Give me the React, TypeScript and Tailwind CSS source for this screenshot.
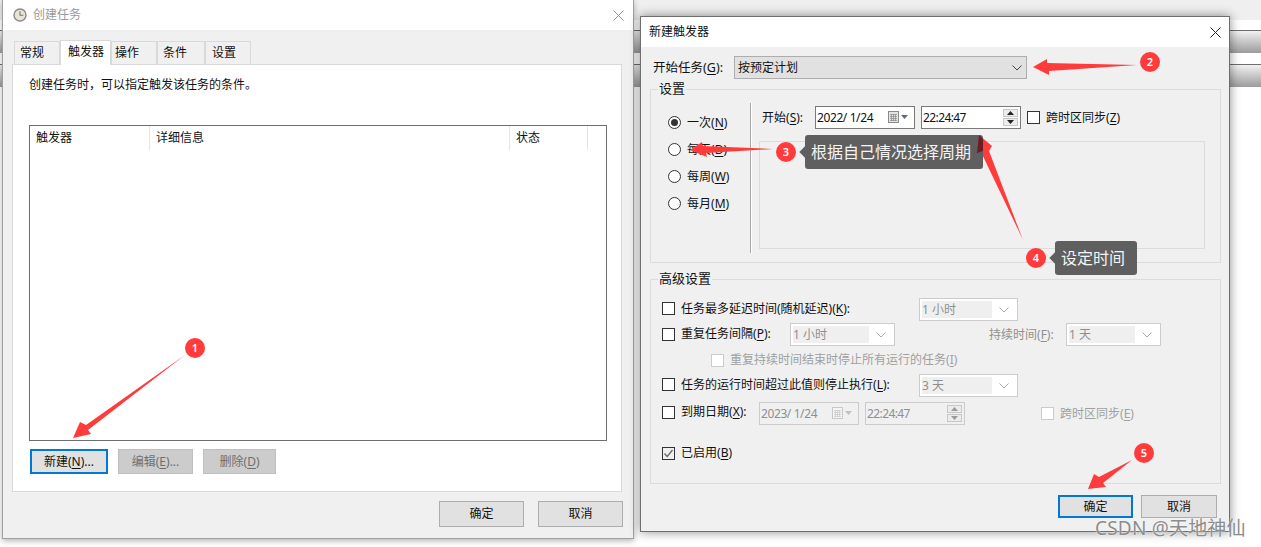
import type { ReactNode } from 'react';

const FONT = "font-['Noto_Sans','Noto_Sans_CJK_SC',sans-serif]";

function Key({ k }: { k: string }) {
  return (
    <>
      (<span className="underline underline-offset-2">{k}</span>)
    </>
  );
}

function CheckBox({ off, checked }: { off?: boolean; checked?: boolean }) {
  return (
    <span
      className={`flex h-[13px] w-[13px] shrink-0 items-center justify-center border ${
        off ? 'border-[#cccccc] bg-white' : checked ? 'border-[#333333] bg-[#f0f0f0]' : 'border-[#333333] bg-white'
      }`}
    >
      {checked && (
        <svg width="11" height="11" viewBox="0 0 11 11" fill="none" stroke="#666666" strokeWidth="1.3">
          <path d="M1.5 5.5 4.2 8.5 9.5 2" />
        </svg>
      )}
    </span>
  );
}

function Radio({ on, label }: { on?: boolean; label: ReactNode }) {
  return (
    <div className="flex h-[27px] items-center gap-[6px]">
      <span className="flex h-[13px] w-[13px] items-center justify-center rounded-full border border-[#333333] bg-white">
        {on && <span className="h-[7px] w-[7px] rounded-full bg-[#333333]" />}
      </span>
      <span>{label}</span>
    </div>
  );
}

function Chevron({ color }: { color: string }) {
  return (
    <svg width="10" height="6" viewBox="0 0 10 6" fill="none" stroke={color} strokeWidth="1">
      <path d="M0.5 0.5 5 5 9.5 0.5" />
    </svg>
  );
}

function OffSelect({ text, w }: { text: string; w: string }) {
  return (
    <div className={`flex h-[23px] items-center border border-[#cccccc] bg-white p-[2px] ${w}`}>
      <div className="flex h-full flex-1 items-center bg-[#efefef] text-[#8f8f8f]">{text}</div>
      <div className="flex w-[23px] justify-center">
        <Chevron color="#a8a8a8" />
      </div>
    </div>
  );
}

function CalendarIcon({ off }: { off?: boolean }) {
  const c = off ? '#c8c8c8' : '#8a8a8a';
  return (
    <svg width="24" height="13" viewBox="0 0 24 13">
      <rect x="0.5" y="0.5" width="10" height="11" fill={off ? '#f4f4f4' : '#e4e4e4'} stroke={c} />
      <path d="M2 3.5h7M2 5.5h7M2 7.5h7M2 9.5h7M3.5 3v7M5.5 3v7M7.5 3v7" stroke={c} strokeWidth="0.7" />
      <path d="M13 4h7l-3.5 4z" fill={off ? '#c0c0c0' : '#5b6b80'} />
    </svg>
  );
}

function DateBox({ text, off }: { text: string; off?: boolean }) {
  return (
    <div
      className={`flex h-[23px] w-[100px] items-center justify-between border pl-[1px] pr-[2px] ${
        off ? 'border-[#cccccc] bg-[#f0f0f0] text-[#8f8f8f]' : 'border-[#7a7a7a] bg-white'
      }`}
    >
      <span className="whitespace-pre tracking-[-0.4px]">{text}</span>
      <CalendarIcon off={off} />
    </div>
  );
}

function TimeBox({ off }: { off?: boolean }) {
  const arrow = off ? '#9a9a9a' : '#222222';
  return (
    <div
      className={`flex h-[23px] w-[100px] items-center justify-between border pl-[1px] pr-[2px] ${
        off ? 'border-[#cccccc] bg-[#f0f0f0] text-[#8f8f8f]' : 'border-[#7a7a7a] bg-white'
      }`}
    >
      <span className="tracking-[-0.6px]">22:24:47</span>
      <div className="flex flex-col gap-[1px]">
        <span className="flex h-[8px] w-[15px] items-center justify-center border border-[#c8c8c8] bg-[#ececec]">
          <svg width="7" height="4" viewBox="0 0 7 4"><path d="M3.5 0 7 4H0z" fill={arrow} /></svg>
        </span>
        <span className="flex h-[8px] w-[15px] items-center justify-center border border-[#c8c8c8] bg-[#ececec]">
          <svg width="7" height="4" viewBox="0 0 7 4"><path d="M0 0h7L3.5 4z" fill={arrow} /></svg>
        </span>
      </div>
    </div>
  );
}

function Btn({ children, w, h, kind }: { children: ReactNode; w: string; h: string; kind?: 'focus' | 'off' }) {
  const style =
    kind === 'focus'
      ? 'border-2 border-[#0078d7] bg-[#e1e1e1]'
      : kind === 'off'
        ? 'border border-[#bfbfbf] bg-[#cccccc] text-[#6f6f6f]'
        : 'border border-[#adadad] bg-[#e1e1e1]';
  return <div className={`flex items-center justify-center ${w} ${h} ${style}`}>{children}</div>;
}

function Group({ title, h, children }: { title: string; h: string; children: ReactNode }) {
  return (
    <fieldset className={`ml-[9px] w-[571px] border border-[#dcdcdc] ${h}`}>
      <legend className="ml-[7px] px-[1px] pb-[2px] text-[13px] leading-[16px]">{title}</legend>
      {children}
    </fieldset>
  );
}

function TaskWindow() {
  const tabs = [
    { name: '常规', cls: 'w-[46px] pl-[5px]' },
    { name: '触发器', cls: 'w-[51px] pl-[7px]', on: true },
    { name: '操作', cls: 'w-[46px] pl-[3px]' },
    { name: '条件', cls: 'w-[48px] pl-[5px]' },
    { name: '设置', cls: 'w-[46px] pl-[6px]' },
  ];
  return (
    <div className="absolute left-[2px] top-0 h-[539px] w-[632px] border-x border-b border-[#a0a0a0] bg-[#f0f0f0] shadow-[0_2px_6px_rgba(0,0,0,0.3)]">
      <div className="flex h-[30px] items-center justify-between bg-white pl-[10px] pr-[9px]">
        <div className="flex items-center gap-[6px] text-[#9a9a9a]">
          <svg width="14" height="14" viewBox="0 0 14 14">
            <circle cx="7" cy="7" r="6" fill="#e8e4d8" stroke="#8a8a8a" strokeWidth="1.4" />
            <path d="M7 3.2V7.3H10.4" fill="none" stroke="#777777" strokeWidth="1.1" />
          </svg>
          <span>创建任务</span>
        </div>
        <svg width="11" height="11" viewBox="0 0 11 11" stroke="#8f8f8f" strokeWidth="1">
          <path d="M0.5 0.5 10.5 10.5M10.5 0.5 0.5 10.5" />
        </svg>
      </div>

      <div className="flex h-[34px] items-end pl-[11px] pt-[9px]">
        {tabs.map((t) => (
          <div
            key={t.name}
            className={`flex items-center border border-b-0 border-[#d9d9d9] ${t.cls} ${
              t.on ? 'relative z-10 -mb-[1px] h-[25px] bg-white pb-[3px]' : 'h-[23px] bg-[#f0f0f0]'
            }`}
          >
            {t.name}
          </div>
        ))}
      </div>

      <div className="ml-[9px] h-[428px] w-[610px] border border-[#d9d9d9] bg-white pl-[16px] pt-[11px]">
        <p className="leading-[18px]">创建任务时，可以指定触发该任务的条件。</p>
        <div className="mt-[31px] h-[316px] w-[578px] border border-[#6e6e6e]">
          <div className="flex h-[24px] items-center">
            <div className="flex h-full w-[120px] items-center border-r border-[#e5e5e5] pl-[6px]">触发器</div>
            <div className="flex h-full w-[360px] items-center border-r border-[#e5e5e5] pl-[6px]">详细信息</div>
            <div className="flex h-full w-[78px] items-center border-r border-[#e5e5e5] pl-[6px]">状态</div>
          </div>
        </div>
        <div className="mt-[8px] flex pl-[1px]">
          <Btn w="w-[78px]" h="h-[25px]" kind="focus">新建<Key k="N" />...</Btn>
          <div className="ml-[10px]">
            <Btn w="w-[75px]" h="h-[25px]" kind="off">编辑<Key k="E" />...</Btn>
          </div>
          <div className="ml-[10px]">
            <Btn w="w-[73px]" h="h-[25px]" kind="off">删除<Key k="D" /></Btn>
          </div>
        </div>
      </div>

      <div className="mt-[9px] flex justify-end gap-[14px] pr-[10px]">
        <Btn w="w-[85px]" h="h-[26px]" >确定</Btn>
        <Btn w="w-[85px]" h="h-[26px]" >取消</Btn>
      </div>
    </div>
  );
}

function TriggerWindow() {
  return (
    <div className="absolute left-[640px] top-[16px] h-[516px] w-[590px] border border-[#6e6e6e] bg-[#f0f0f0] shadow-[0_0_10px_rgba(0,0,0,0.45)]">
      <div className="flex h-[30px] items-center justify-between bg-white pl-[8px] pr-[8px]">
        <span>新建触发器</span>
        <svg width="11" height="11" viewBox="0 0 11 11" stroke="#222222" strokeWidth="1">
          <path d="M0.5 0.5 10.5 10.5M10.5 0.5 0.5 10.5" />
        </svg>
      </div>

      <div className="mt-[9px] flex h-[23px] items-center pl-[12px]">
        <span className="w-[81px] text-[12.5px]">开始任务<Key k="G" />:</span>
        <div className="flex h-full w-[293px] items-center justify-between border border-[#adadad] bg-[#e1e1e1] pl-[3px] pr-[3px]">
          <span>按预定计划</span>
          <span className="pr-[1px]"><Chevron color="#444444" /></span>
        </div>
      </div>

      <div className="mt-[1px]">
        <Group title="设置" h="h-[183px]">
          <div className="flex">
            <div className="w-[99px] pl-[17px] pt-[11px]">
              <Radio on label={<>一次<Key k="N" /></>} />
              <Radio label={<>每天<Key k="D" /></>} />
              <Radio label={<>每周<Key k="W" /></>} />
              <Radio label={<>每月<Key k="M" /></>} />
            </div>
            <div className="mt-[5px] h-[150px] w-[2px] border-l border-r border-l-[#a8a8a8] border-r-white" />
            <div className="pl-[7px] pt-[8px]">
              <div className="flex items-center">
                <span className="w-[56px] pl-[3px]">开始<Key k="S" />:</span>
                <DateBox text="2022/ 1/24" />
                <div className="ml-[6px]"><TimeBox /></div>
                <div className="ml-[6px] flex items-center gap-[6px]">
                  <CheckBox />
                  <span>跨时区同步<Key k="Z" /></span>
                </div>
              </div>
              <div className="mt-[12px] h-[108px] w-[446px] border border-[#dcdcdc]" />
            </div>
          </div>
        </Group>
      </div>

      <div className="mt-[7px]">
        <Group title="高级设置" h="h-[214px]">
          <div className="pl-[11px] pt-[10px]">
            <div className="flex h-[23px] items-center">
              <div className="flex w-[257px] items-center gap-[6px] pb-[2px]">
                <CheckBox />
                <span>任务最多延迟时间(随机延迟)<Key k="K" />:</span>
              </div>
              <OffSelect text="1 小时" w="w-[99px]" />
            </div>
            <div className="mt-[2px] flex h-[23px] items-center">
              <div className="flex w-[128px] items-center gap-[6px] pb-[1px]">
                <CheckBox />
                <span>重复任务间隔<Key k="P" />:</span>
              </div>
              <OffSelect text="1 小时" w="w-[105px]" />
              <span className="ml-[94px] w-[77px] text-[#8f8f8f]">持续时间<Key k="F" />:</span>
              <OffSelect text="1 天" w="w-[95px]" />
            </div>
            <div className="flex h-[28px] items-center gap-[6px] pl-[49px] text-[#a0a0a0]">
              <CheckBox off />
              <span>重复持续时间结束时停止所有运行的任务<Key k="I" /></span>
            </div>
            <div className="flex h-[23px] items-center">
              <div className="flex w-[257px] items-center gap-[6px] pb-[2px]">
                <CheckBox />
                <span>任务的运行时间超过此值则停止执行<Key k="L" />:</span>
              </div>
              <OffSelect text="3 天" w="w-[99px]" />
            </div>
            <div className="mt-[5px] flex h-[23px] items-center">
              <div className="flex w-[97px] items-center gap-[6px] pb-[3px]">
                <CheckBox />
                <span>到期日期<Key k="X" />:</span>
              </div>
              <DateBox text="2023/ 1/24" off />
              <div className="ml-[6px]"><TimeBox off /></div>
              <div className="ml-[76px] flex items-center gap-[6px] text-[#a0a0a0]">
                <CheckBox off />
                <span>跨时区同步<Key k="E" /></span>
              </div>
            </div>
            <div className="mt-[16px] flex h-[24px] items-center gap-[6px]">
              <CheckBox checked />
              <span>已启用<Key k="B" /></span>
            </div>
          </div>
        </Group>
      </div>

      <div className="mt-[11px] flex justify-end gap-[8px] pr-[12px]">
        <Btn w="w-[75px]" h="h-[23px]" kind="focus">确定</Btn>
        <Btn w="w-[76px]" h="h-[23px]">取消</Btn>
      </div>
    </div>
  );
}

function Badge({ n, x, y }: { n: number; x: string; y: string }) {
  return (
    <div className={`absolute flex h-[20px] w-[20px] items-center justify-center rounded-full bg-[#ff3b3b] text-[11px] font-semibold text-white ${x} ${y}`}>
      {n}
    </div>
  );
}

function Tip({ text, cls }: { text: string; cls: string }) {
  return (
    <div className={`absolute flex h-[34px] items-center rounded-[3px] bg-[#5f5f5f] pl-[6px] text-[16px] text-[#f4f4f4] ${cls}`}>
      <span className="absolute -left-[4px] top-[13px] h-[8px] w-[8px] rotate-45 bg-[#5f5f5f]" />
      {text}
    </div>
  );
}

function Marks() {
  return (
    <>
      <svg className="pointer-events-none absolute left-0 top-0" width="1261" height="547" viewBox="0 0 1261 547" fill="#ff3b3b">
        <polygon points="185,355 86,425 80,422 73,438 91,434 88,430" />
        <polygon points="1137,65 1047,63 1047,59 1033,67 1049,75 1049,71" />
        <polygon points="773,149 703,146 702,142 690,150 707,157 706,153" />
        <polygon points="1023,240 989,151 992,146 979,135 977,153 981,152" />
        <polygon points="1132,460 1099,477 1094,474 1088,489 1106,487 1103,483" />
      </svg>
      <Tip text="根据自己情况选择周期" cls="left-[805px] top-[135px] w-[178px]" />
      <svg className="pointer-events-none absolute left-[975px] top-[133px]" width="10" height="22" viewBox="0 0 10 22">
        <polygon points="4,2 8,6 8,18 2,20" fill="#6b1d1f" />
      </svg>
      <Tip text="设定时间" cls="left-[1055px] top-[241px] w-[82px]" />
      <Badge n={1} x="left-[185px]" y="top-[338px]" />
      <Badge n={2} x="left-[1140px]" y="top-[52px]" />
      <Badge n={3} x="left-[776px]" y="top-[142px]" />
      <Badge n={4} x="left-[1026px]" y="top-[248px]" />
      <Badge n={5} x="left-[1134px]" y="top-[443px]" />
      <div className="absolute left-[1095px] top-[516px] text-[19px] leading-[24px] tracking-[0.2px] text-[#8c8c8c] [text-shadow:0_0_2px_#ffffff]">
        CSDN @天地神仙
      </div>
    </>
  );
}

export default function App() {
  return (
    <div className={`relative h-[547px] w-[1261px] overflow-hidden bg-white text-[12px] leading-[16px] text-[#111111] ${FONT}`}>
      <div className="h-[20px] bg-[#efefef]" />
      <div className="mt-[10px] h-[23px] border-t border-[#6e6e6e] bg-gradient-to-b from-[#f2f2f2] to-[#9c9c9c]" />
      <div className="mt-[11px] h-[23px] border-t border-[#6e6e6e] bg-gradient-to-b from-[#f2f2f2] to-[#9c9c9c]" />
      <TaskWindow />
      <TriggerWindow />
      <Marks />
    </div>
  );
}
